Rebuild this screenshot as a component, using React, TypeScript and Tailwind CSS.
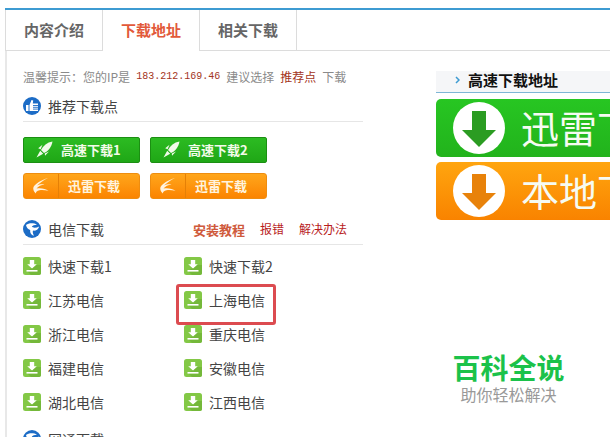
const cjk = "font-['Noto_Sans_CJK_SC','Noto_Sans',sans-serif]";

function DownloadIcon() {
  return (
    <svg width="18" height="18" viewBox="0 0 18 18" className="shrink-0">
      <rect width="18" height="18" rx="2.5" fill="#83c846" />
      <path d="M18 8 L18 15.5 A2.5 2.5 0 0 1 15.5 18 L8 18 L4 14 L13 8 Z" fill="#74b83a" />
      <path d="M6.8 3h4.4v4.2h2.6L9 11.6 4.2 7.2h2.6z" fill="#fff" />
      <rect x="3.5" y="13" width="11" height="1.6" fill="#fff" />
    </svg>
  );
}

function ThumbIcon() {
  return (
    <svg width="18" height="18" viewBox="0 0 18 18" className="shrink-0">
      <circle cx="9" cy="9" r="9" fill="#1c6cc6" />
      <rect x="3" y="8" width="2.5" height="6" fill="#fff" />
      <path d="M6.5 8 L8.5 3 L10.2 3.5 L9.8 6.5 H15 V14 H6.5 Z" fill="#fff" />
      <path d="M10 8.5h5M10 10.3h5M10 12.1h5" stroke="#1c6cc6" strokeWidth="0.9" />
    </svg>
  );
}

function GlobeIcon() {
  return (
    <svg width="18" height="18" viewBox="0 0 18 18" className="shrink-0">
      <circle cx="9" cy="9" r="9" fill="#1c6cc6" />
      <path d="M3 5 C6 2.5 11 3 14 4.5 C11.5 5 9.5 5.6 8.8 6.6 C10 8 13 8 16.2 6.4 C15.5 9.5 12.5 11 10 10.6 C9.5 12 9.8 13.8 11 15.6 C8.5 15.4 6.8 13 7.2 10 C5 9.5 3.5 7.5 3 5 Z" fill="#fff" />
    </svg>
  );
}

function RocketIcon() {
  return (
    <svg width="17" height="17" viewBox="0 0 17 17" className="shrink-0">
      <path d="M16.5 0.5 C11 1.5 7.2 4.5 5 9 L8 12 C12.5 10 15.5 6 16.5 0.5 Z" fill="#f2faea" />
      <path d="M6.5 3.8 L2.2 7.2 L4.6 8.2 Z M13 10.5 L9 14.8 L8.8 12.4 Z M4.2 9.8 L0.5 16.5 L7.2 12.8 Z" fill="#f2faea" />
    </svg>
  );
}

function SwooshIcon() {
  return (
    <svg width="18" height="18" viewBox="0 0 18 18" className="shrink-0">
      <path d="M16 1 C9.5 3 4 6 1.5 10 C0.8 12 1.5 14.5 4 16.5 C3.8 14.8 5 13.6 7.5 13.2 C10.5 12.8 13.5 13.2 16.5 13.8 C13.5 11.6 9.5 10.8 4.5 11.4 C6.5 9.2 9 8 12.5 7.5 C9.5 7 7 7.6 5 8.6 C8 5.6 12 3 16 1 Z" fill="#fff3e0" />
    </svg>
  );
}

function GreenButton({ label }: { label: string }) {
  return (
    <div className="flex h-[26px] w-[117px] items-center rounded-[2px] border border-[#1b8f12] bg-gradient-to-b from-[#2cbb22] to-[#1fa716] pb-[1px] pl-[12px]">
      <RocketIcon />
      <span className="ml-[8px] text-[13px] leading-none font-bold text-[#f4fbe9]">{label}</span>
    </div>
  );
}

function OrangeButton() {
  return (
    <div className="flex h-[26px] w-[117px] items-center rounded-[3px] border border-[#ee8d10] bg-gradient-to-b from-[#ffa61a] to-[#fb8400]">
      <div className="flex h-full w-[35px] items-center justify-center border-r border-[#e58006]">
        <SwooshIcon />
      </div>
      <span className="mb-[2px] ml-[9px] text-[13px] leading-none font-bold text-[#fff4df]">迅雷下载</span>
    </div>
  );
}

function SectionHead({ icon, title, children }: { icon: React.ReactNode; title: string; children?: React.ReactNode }) {
  return (
    <div className="flex h-[28px] items-center border-b border-[#e6e6e6] pb-[3px]">
      {icon}
      <span className="ml-[7px] text-[14px] leading-none text-[#444]">{title}</span>
      {children}
    </div>
  );
}

function DownloadRow({ label }: { label: string }) {
  return (
    <div className="flex h-[34px] items-center">
      <DownloadIcon />
      <span className="ml-[7px] text-[14px] leading-none text-[#444]">{label}</span>
    </div>
  );
}

const rows = [
  "快速下载1", "快速下载2",
  "江苏电信", "上海电信",
  "浙江电信", "重庆电信",
  "福建电信", "安徽电信",
  "湖北电信", "江西电信",
];

function Banner({ label, arrow, bg }: { label: string; arrow: string; bg: string }) {
  return (
    <div className={`flex h-[58px] items-center overflow-hidden rounded-l-[5px] pl-[17px] ${bg}`}>
      <svg width="52" height="52" viewBox="0 0 52 52" className="shrink-0">
        <circle cx="26" cy="26" r="26" fill="#fff" />
        <path d="M19 9h14v19h10L26 45 9 28h10z" fill={arrow} />
      </svg>
      <span className="mb-[2px] ml-[16px] text-[38px] leading-none whitespace-nowrap text-[#f6fbf2]">{label}</span>
    </div>
  );
}

export default function App() {
  return (
    <div className={`relative h-[437px] w-[610px] overflow-hidden bg-white pt-[8px] ${cjk}`}>
      <div className="ml-[5px] border-t-2 border-[#3d9bd2]">
        {/* Tabs */}
        <div className="flex h-[41px] border-b border-l border-[#dcdcdc]">
          <div className="flex w-[97px] items-center justify-center border-r border-[#dcdcdc] text-[15px] font-bold text-[#666]">内容介绍</div>
          <div className="-mb-px flex h-[41px] w-[97px] items-center justify-center border-r border-[#dcdcdc] bg-white text-[15px] font-bold text-[#e2593a]">下载地址</div>
          <div className="flex w-[97px] items-center justify-center border-r border-[#dcdcdc] text-[15px] font-bold text-[#666]">相关下载</div>
        </div>

        <div className="flex h-[400px] border-l-2 border-[#e8e8e8] pl-[16px]">
          {/* Left column */}
          <div className="w-[340px] shrink-0 pt-[16px]">
            <div className="flex h-[20px] items-center whitespace-nowrap text-[12px] leading-none text-[#8a8a8a]">
              <span>温馨提示：您的IP是</span>
              <span className="ml-[6px] font-['Liberation_Mono',monospace] text-[10px] text-[#a3341c]">183.212.169.46</span>
              <span className="ml-[6px]">建议选择</span>
              <span className="ml-[6px] text-[#a3341c]">推荐点</span>
              <span className="ml-[6px]">下载</span>
            </div>
            <div className="mt-[7px]">
              <SectionHead icon={<ThumbIcon />} title="推荐下载点" />
            </div>
            <div className="mt-[15px] flex gap-[10px]">
              <GreenButton label="高速下载1" />
              <GreenButton label="高速下载2" />
            </div>
            <div className="mt-[10px] flex gap-[10px]">
              <OrangeButton />
              <OrangeButton />
            </div>
            <div className="mt-[18px]">
              <SectionHead icon={<GlobeIcon />} title="电信下载">
                <div className="ml-auto flex items-center gap-[15px] pr-[16px] text-[12px] leading-none">
                  <span className="text-[13px] font-bold text-[#cf5a3c]">安装教程</span>
                  <span className="text-[#b81c1c]">报错</span>
                  <span className="text-[#b81c1c]">解决办法</span>
                </div>
              </SectionHead>
            </div>
            <div className="mt-[4px] grid grid-cols-[161px_1fr]">
              {rows.map((r) => (
                <DownloadRow key={r} label={r} />
              ))}
            </div>
            <div className="mt-[8px]">
              <SectionHead icon={<GlobeIcon />} title="网通下载" />
            </div>
          </div>

          {/* Right column */}
          <div className="ml-[73px] min-w-0 flex-1 pt-[20px]">
            <div className="flex h-[22px] items-center border-b border-[#7fb6d6] bg-[#f5f6f8] pb-[4px] pl-[19px]">
              <svg width="5" height="8" viewBox="0 0 5 8" className="shrink-0">
                <path d="M1 1l3 3-3 3" fill="none" stroke="#3d9bd2" strokeWidth="1.5" />
              </svg>
              <span className="ml-[8px] text-[15px] leading-none font-bold whitespace-nowrap text-[#111]">高速下载地址</span>
            </div>
            <div className="mt-[6px]">
              <Banner label="迅雷下载" arrow="#2b9c22" bg="bg-gradient-to-b from-[#27c622] to-[#22b31c]" />
            </div>
            <div className="mt-[5px]">
              <Banner label="本地下载" arrow="#e8820a" bg="bg-gradient-to-b from-[#ffa50f] to-[#f98300]" />
            </div>
          </div>
        </div>
      </div>

      {/* Highlight box drawn over the list */}
      <div className="absolute top-[284px] left-[176px] h-[41px] w-[100px] rounded-[3px] border-[3px] border-[#dc4b50]" />

      {/* Watermark */}
      <div className="absolute top-[345px] left-[432px] flex h-[67px] w-[153px] flex-col items-center bg-white/95 pt-[6px]">
        <span className="text-[28px] leading-[32px] font-bold text-[#1bc24a]">百科全说</span>
        <span className="text-[16px] leading-[22px] text-[#999]">助你轻松解决</span>
      </div>
    </div>
  );
}
